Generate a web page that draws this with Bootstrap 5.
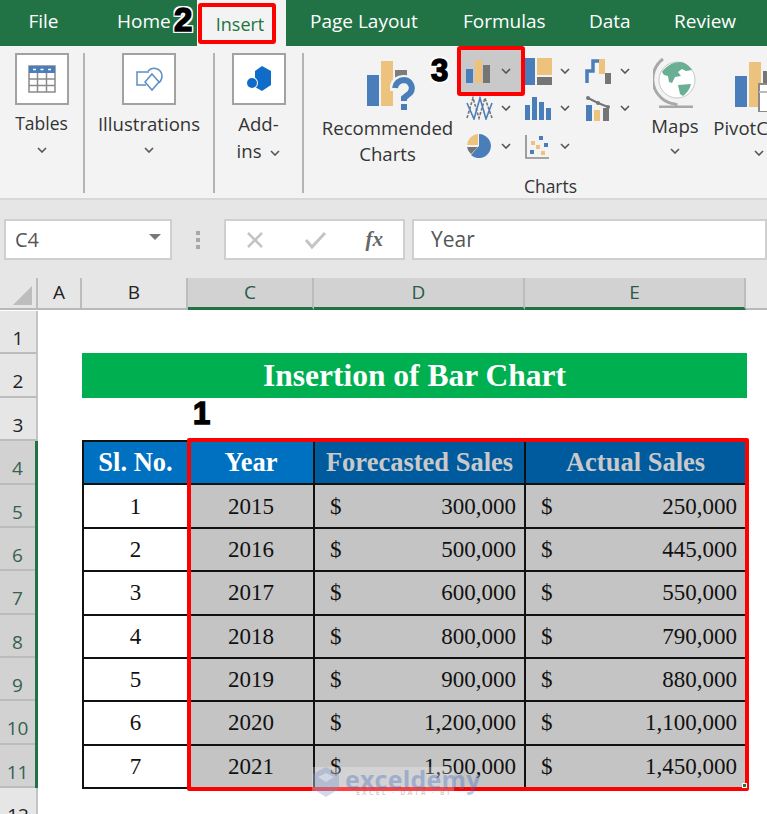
<!DOCTYPE html>
<html lang="en">
<head>
    <meta charset="UTF-8">
    <meta name="viewport" content="width=device-width, initial-scale=1.0">
    <title>Insertion of Bar Chart</title>
    <link href="https://cdn.jsdelivr.net/npm/bootstrap@5.3.0/dist/css/bootstrap.min.css" rel="stylesheet">
    <style>
        body { background: #fff; overflow: hidden; font-family: "Open Sans", "Liberation Sans", sans-serif; color: #333; }
        .app { width: 767px; height: 814px; overflow: hidden; }

        /* tab strip */
        .tab-strip { height: 46px; background: #217346; color: #fff; font-size: 19px; }
        .tab-item { line-height: 43px; white-space: nowrap; flex: none; }
        .tab-file { width: 87px; text-align: center; }
        .tab-home { width: 110px; padding-left: 30px; }
        .tab-insert { width: 89px; background: #f3f3f3; color: #217346; padding: 3px 0 0 1px; font-size: 18px; }
        .tab-insert span { display: block; width: 78px; height: 41px; line-height: 35px; border: 4px solid #f00; border-radius: 3px; text-align: center; padding-left: 6px; }
        .tab-layout { width: 177px; padding-left: 24px; }
        .tab-formulas { width: 126px; }
        .tab-data { width: 85px; }

        /* ribbon */
        .ribbon { height: 154px; background: #f3f3f3; border-bottom: 2px solid #d8d8d8; font-size: 18.6px; line-height: 27px; }
        .rb-group { margin-top: 7px; height: 140px; border-right: 2px solid #b4b4b4; flex: none; }
        .rb-tables { width: 85px; }
        .rb-illus { width: 130px; }
        .rb-addins { width: 89px; }
        .rb-tile { width: 54px; height: 52px; background: #fff; border: 2px solid #a2a2a2; margin-bottom: 5px; }
        .rb-label { white-space: nowrap; }
        .rb-tight { font-size: 17.5px; }
        .chev { width: 10px; height: 6px; display: block; flex: none; }
        .chev-row { height: 26px; }
        .rb-charts { width: 463px; flex: none; }
        .charts-top { height: 126px; flex: none; }
        .charts-name { padding-left: 30px; text-align: center; line-height: 26px; margin-top: 1px; font-size: 17.5px; }
        .rec-block { width: 153px; flex: none; padding: 15px 0 0 14px; line-height: 26px; text-align: center; white-space: nowrap; }
        .rec-block svg { display: block; margin: 0 auto 4px; position: relative; left: 3px; }
        .gallery { display: grid; grid-template-columns: 68px 60px 60px; grid-template-rows: 50px 24px 52px; width: 188px; flex: none; }
        .gal-cell { display: flex; align-items: center; justify-content: space-between; padding-right: 15px; }
        .gal-first { padding-left: 9px; padding-right: 14px; }
        .gal-on { border: 4px solid #f00; border-radius: 3px; background: #c9c9c9; padding-left: 5px; padding-right: 10px; }
        .big-block { padding-top: 16px; text-align: center; flex: none; }
        .big-maps { width: 60px; padding-top: 10px; }
        .big-pivot { width: 108px; white-space: nowrap; }
        .big-block svg { display: block; margin: 0 auto; }
        .big-block .chev { margin: 9px auto 0; }
        .pivot-name { padding-left: 8px; margin-top: 2px; }

        /* formula bar */
        .formula-bar { height: 78px; background: #e6e6e6; padding-top: 19px; font-size: 20px; color: #555; }
        .fb-box { height: 41px; background: #fff; border: 2px solid #cfcfcf; flex: none; }
        .fb-name { width: 168px; margin-left: 4px; padding: 0 9px; }
        .fb-tri { width: 0; height: 0; border-left: 6px solid transparent; border-right: 6px solid transparent; border-top: 6px solid #777; margin-top: -5px; }
        .fb-dots { width: 52px; height: 41px; gap: 3px; flex: none; }
        .fb-dots i { display: block; width: 4px; height: 4px; background: #a8a8a8; }
        .fb-buttons { width: 181px; padding: 0 20px 0 19px; }
        .fb-fx { font: italic bold 21px "Liberation Serif", serif; color: #666; }
        .fb-value { width: 355px; margin-left: 7px; padding-left: 17px; font-size: 21px; }

        /* column and row headers */
        .col-heads { height: 32px; background: #e6e6e6; font-size: 19px; border-bottom: 2px solid #b8b8b8; }
        .col-head { flex: none; text-align: center; line-height: 29px; border-right: 2px solid #bcbcbc; height: 30px; color: #222; }
        .col-on { background: #d2d2d2; border-bottom: 3px solid #217346; height: 32px; color: #275c46; }
        .w-corner { width: 38px; }
        .w-a { width: 44px; }
        .w-b { width: 106px; }
        .w-c { width: 126px; }
        .w-d { width: 211px; }
        .w-e { width: 221px; }
        .corner-tri { width: 0; height: 0; border-style: solid; border-width: 0 0 19px 19px; border-color: transparent transparent #bdbdbd transparent; margin: 8px 0 0 13px; }
        .row-heads { width: 38px; flex: none; font-size: 19px; padding-top: 1px; }
        .row-head { height: 43.375px; background: #e6e6e6; border-right: 2px solid #c4c4c4; border-bottom: 2px solid #bcbcbc; padding-top: 14px; line-height: 26px; text-align: center; color: #222; }
        .row-span { border-right: 3px solid #217346; }
        .row-on { background: #d2d2d2; border-right: 0; color: #37614f; }
        .row-last { border-bottom: 0; }

        /* sheet */
        .sheet-body { padding: 43px 0 0 44px; }
        .sheet-title { width: 665px; height: 45px; background: #00b050; color: #fff; text-align: center; font: bold 31.5px/45px "Liberation Serif", serif; margin-bottom: 42px; }
        .sales-table { width: 663px; table-layout: fixed; border-collapse: collapse; font: 23px "Liberation Serif", serif; color: #111; }
        .sales-table .w-b { width: 105px; }
        .sales-table th, .sales-table td { height: 43.375px; padding: 0 8px 0 15px; border: 2px solid #111; vertical-align: middle; line-height: 1; color: #111; background-color: #c4c4c4; }
        .sales-table th { font-size: 26.5px; text-align: center; padding: 0; font-weight: 700; white-space: nowrap; }
        .sales-table .th-blue { background-color: #0070c0; color: #fff; }
        .sales-table .th-navy { background-color: #005a9e; color: #c9c9c9; }
        .sales-table .td-plain { background-color: #fff; text-align: center; padding: 0; }
        .sales-table .td-year { text-align: center; padding: 0; }

        /* things that lie over the page */
        .callout { position: absolute; font: 900 33px/1 "Liberation Sans", sans-serif; color: #000; -webkit-text-stroke: 1.5px #000; text-shadow: 2px 0 #fff, -2px 0 #fff, 0 2px #fff, 0 -2px #fff, 2px 2px #fff, -2px -2px #fff, 2px -2px #fff, -2px 2px #fff; }
        .call-2 { left: 174px; top: 3px; }
        .call-3 { left: 431px; top: 55px; font-size: 31px; }
        .call-1 { left: 193px; top: 398px; font-size: 31px; text-shadow: none; }
        .range-box { position: absolute; left: 187px; top: 438px; width: 562px; height: 353px; border: 4px solid #f00; border-radius: 2px; }
        .fill-handle { position: absolute; left: 742px; top: 783px; width: 5px; height: 5px; background: #217346; border: 1px solid #fff; }
        .watermark { position: absolute; left: 312px; top: 767px; width: 142px; height: 24px; background: rgba(255,255,255,.25); }
        .wm-name { position: absolute; left: 33px; top: -3px; font: 700 25px/30px "Open Sans", sans-serif; color: rgba(70,110,190,.38); letter-spacing: .2px; }
        .wm-tag { position: absolute; left: 44px; top: 21px; font: 700 7px/10px "Open Sans", sans-serif; color: rgba(120,120,120,.35); letter-spacing: 2.2px; white-space: nowrap; }
    </style>
</head>
<body>
    <svg width="0" height="0" class="position-absolute">
        <symbol id="chev" viewBox="0 0 10 6"><path d="M1 1l4 4 4-4" fill="none" stroke="#555" stroke-width="1.6"/></symbol>
    </svg>

    <div class="app position-relative">
        <!-- tabs -->
        <div class="tab-strip d-flex">
            <div class="tab-item tab-file">File</div>
            <div class="tab-item tab-home">Home</div>
            <div class="tab-item tab-insert"><span>Insert</span></div>
            <div class="tab-item tab-layout">Page Layout</div>
            <div class="tab-item tab-formulas">Formulas</div>
            <div class="tab-item tab-data">Data</div>
            <div class="tab-item">Review</div>
        </div>

        <!-- ribbon -->
        <div class="ribbon d-flex overflow-hidden">
            <div class="rb-group rb-tables d-flex flex-column align-items-center">
                <div class="rb-tile d-flex align-items-center justify-content-center">
                    <svg width="28" height="28" viewBox="0 0 28 28"><rect x="1" y="1" width="26" height="26" fill="#fff" stroke="#8a8a8a" stroke-width="1.5"/><rect x="1" y="1" width="26" height="7" fill="#4a7ebb"/><path d="M5 4.500h3M12.500 4.500h3M20 4.500h3" stroke="#fff" stroke-width="1.500"/><path d="M1 14h26M1 20.500h26M9.500 8v19M18.500 8v19" stroke="#8a8a8a" stroke-width="1.500"/></svg>
                </div>
                <div class="rb-label rb-tight">Tables</div>
                <div class="chev-row d-flex align-items-center"><svg class="chev"><use href="#chev"/></svg></div>
            </div>
            <div class="rb-group rb-illus d-flex flex-column align-items-center">
                <div class="rb-tile d-flex align-items-center justify-content-center">
                    <svg width="30" height="30" viewBox="0 0 30 30" fill="none" stroke="#5b8ec4" stroke-width="1.500"><path d="M12 21H3V8h12"/><path d="M14 7a8 8 0 0 1 14 5c0 3-1 5-3 7"/><path d="M18 10l7 8-7 8-7-8z"/></svg>
                </div>
                <div class="rb-label">Illustrations</div>
                <div class="chev-row d-flex align-items-center"><svg class="chev"><use href="#chev"/></svg></div>
            </div>
            <div class="rb-group rb-addins d-flex flex-column align-items-center">
                <div class="rb-tile d-flex align-items-center justify-content-center">
                    <svg width="28" height="26" viewBox="0 0 28 26"><path d="M17 0l9 5v14l-9 6-7-4V5z" fill="#0f6cc8"/><circle cx="7" cy="17" r="6" fill="#fff"/><circle cx="7" cy="17" r="5" fill="#0f6cc8"/></svg>
                </div>
                <div class="rb-label text-center">Add-<br>ins <svg class="chev d-inline-block ms-1"><use href="#chev"/></svg></div>
            </div>
            <div class="rb-charts d-flex flex-column">
                <div class="charts-top d-flex">
                    <div class="rec-block">
                        <svg width="48" height="50" viewBox="0 0 48 50"><rect x="0" y="14" width="12" height="31" fill="#4a7ebb"/><rect x="14" y="0" width="12" height="45" fill="#edc27d"/><rect x="28" y="9" width="12" height="13" fill="#7d7d7d"/><path d="M28 30v-5a8 8 0 0 1 8-6h2a8 8 0 0 1 6 13l-7 6v3" fill="none" stroke="#f3f3f3" stroke-width="10"/><path d="M28 27a9 9 0 0 1 9-8 8 8 0 0 1 6 13l-6 5v3" fill="none" stroke="#4a7ebb" stroke-width="6"/><rect x="34" y="43" width="6" height="6" fill="#4a7ebb"/></svg>
                        <div>Recommended<br>Charts</div>
                    </div>
                    <div class="gallery">
                        <div class="gal-cell gal-on">
                            <svg width="25" height="25" viewBox="0 0 25 25"><rect y="10" width="7" height="14" fill="#4a7ebb"/><rect x="9" y="1" width="7" height="23" fill="#edc27d"/><rect x="17" y="6" width="7" height="18" fill="#757575"/></svg>
                            <svg class="chev"><use href="#chev"/></svg>
                        </div>
                        <div class="gal-cell">
                            <svg width="27" height="27" viewBox="0 0 27 27"><rect width="10" height="27" fill="#4a7ebb"/><rect x="12" width="15" height="17" fill="#edc27d"/><rect x="12" y="19" width="15" height="8" fill="#757575"/></svg>
                            <svg class="chev"><use href="#chev"/></svg>
                        </div>
                        <div class="gal-cell">
                            <svg width="26" height="26" viewBox="0 0 26 26"><rect x="14" y="1" width="6" height="15" fill="#edc27d"/><rect x="20" y="15" width="6" height="11" fill="#757575"/><path d="M2 25V13h6V3h6" fill="none" stroke="#4a7ebb" stroke-width="3.500"/></svg>
                            <svg class="chev"><use href="#chev"/></svg>
                        </div>
                        <div class="gal-cell gal-first">
                            <svg width="27" height="24" viewBox="0 0 27 24" fill="none" stroke-width="1.600"><path d="M1 22L7 2l6 20 6-20 7 20" stroke="#757575" stroke-dasharray="3 1.500"/><path d="M1 7l7 16 6-21 6 21 6-16" stroke="#4a7ebb"/></svg>
                            <svg class="chev"><use href="#chev"/></svg>
                        </div>
                        <div class="gal-cell">
                            <svg width="26" height="24" viewBox="0 0 26 24" fill="#4a7ebb"><rect y="9" width="5" height="15"/><rect x="7" y="1" width="5" height="23"/><rect x="14" y="6" width="5" height="18"/><rect x="21" y="12" width="5" height="12"/></svg>
                            <svg class="chev"><use href="#chev"/></svg>
                        </div>
                        <div class="gal-cell">
                            <svg width="25" height="25" viewBox="0 0 25 25"><rect x="1" y="9" width="6" height="16" fill="#4a7ebb"/><rect x="9" y="14" width="6" height="11" fill="#edc27d"/><rect x="18" y="12" width="6" height="13" fill="#757575"/><path d="M3 2l10 5 10 4" fill="none" stroke="#777" stroke-width="2"/><circle cx="3" cy="2" r="2" fill="#777"/><circle cx="13" cy="7" r="2" fill="#777"/><circle cx="23" cy="11" r="2" fill="#777"/></svg>
                            <svg class="chev"><use href="#chev"/></svg>
                        </div>
                        <div class="gal-cell gal-first">
                            <svg width="26" height="26" viewBox="0 0 26 26"><path d="M13 13V1a12 12 0 1 1-8 21z" fill="#4a7ebb"/><path d="M12 12V1A12 12 0 0 0 1 12z" fill="#edc27d"/><path d="M12 14H1a12 12 0 0 0 4 7z" fill="#757575"/></svg>
                            <svg class="chev"><use href="#chev"/></svg>
                        </div>
                        <div class="gal-cell">
                            <svg width="25" height="25" viewBox="0 0 25 25"><path d="M1 1v23h23" fill="none" stroke="#8a8a8a" stroke-width="1.600"/><rect x="14" y="2" width="4" height="4" fill="#4a7ebb"/><rect x="6" y="7" width="4" height="4" fill="#edc27d"/><rect x="19" y="9" width="4" height="4" fill="#4a7ebb"/><rect x="11" y="11" width="4" height="4" fill="#edc27d"/><rect x="5" y="16" width="4" height="4" fill="#4a7ebb"/><rect x="16" y="17" width="4" height="4" fill="#edc27d"/></svg>
                            <svg class="chev"><use href="#chev"/></svg>
                        </div>
                    </div>
                    <div class="big-block big-maps">
                        <svg width="44" height="52" viewBox="0 0 44 52"><path d="M10 3A25 25 0 0 0 22 48" fill="none" stroke="#a8a8a8" stroke-width="3"/><circle cx="24" cy="24" r="18" fill="#fff" stroke="#c8c8c8"/><path d="M9 16c4-6 11-10 18-10 4 0 9 3 12 8l-6 1-4-2-4 3 3 4-6 1-3 6-3-1-1-6-4-1zM25 29l13-1c-1 5-4 9-8 12l-3-2z" fill="#6aaf94"/><path d="M23 47v3M6 51h34" stroke="#a8a8a8" stroke-width="3"/></svg>
                        <div class="mt-1">Maps</div>
                        <svg class="chev"><use href="#chev"/></svg>
                    </div>
                    <div class="big-block big-pivot">
                        <svg width="48" height="50" viewBox="0 0 48 50"><rect x="0" y="14" width="12" height="31" fill="#4a7ebb"/><rect x="14" y="0" width="12" height="45" fill="#edc27d"/><rect x="28" y="9" width="12" height="14" fill="#757575"/><rect x="24" y="22" width="24" height="28" fill="#fff" stroke="#8a8a8a" stroke-width="2"/><path d="M24 30h24M33 22v28" stroke="#bbb" stroke-width="2"/></svg>
                        <div class="pivot-name">PivotCharts</div>
                        <svg class="chev"><use href="#chev"/></svg>
                    </div>
                </div>
                <div class="charts-name">Charts</div>
            </div>
        </div>

        <!-- formula bar -->
        <div class="formula-bar d-flex">
            <div class="fb-box fb-name d-flex align-items-center justify-content-between">
                <span>C4</span><span class="fb-tri"></span>
            </div>
            <div class="fb-dots d-flex flex-column align-items-center justify-content-center"><i></i><i></i><i></i></div>
            <div class="fb-box fb-buttons d-flex align-items-center justify-content-between">
                <svg width="20" height="20" viewBox="0 0 20 20"><path d="M3 3l14 14M17 3L3 17" stroke="#c4c4c4" stroke-width="2.500"/></svg>
                <svg width="24" height="20" viewBox="0 0 24 20"><path d="M3 10l6 7L22 3" fill="none" stroke="#c4c4c4" stroke-width="3"/></svg>
                <span class="fb-fx">fx</span>
            </div>
            <div class="fb-box fb-value d-flex align-items-center">Year</div>
        </div>

        <!-- column letters -->
        <div class="col-heads d-flex">
            <div class="col-head w-corner"><div class="corner-tri"></div></div>
            <div class="col-head w-a">A</div>
            <div class="col-head w-b">B</div>
            <div class="col-head col-on w-c">C</div>
            <div class="col-head col-on w-d">D</div>
            <div class="col-head col-on w-e">E</div>
        </div>

        <div class="d-flex">
            <!-- row numbers -->
            <div class="row-heads">
                <div class="row-head">1</div>
                <div class="row-head">2</div>
                <div class="row-head">3</div>
                <div class="row-span">
                    <div class="row-head row-on">4</div>
                    <div class="row-head row-on">5</div>
                    <div class="row-head row-on">6</div>
                    <div class="row-head row-on">7</div>
                    <div class="row-head row-on">8</div>
                    <div class="row-head row-on">9</div>
                    <div class="row-head row-on">10</div>
                    <div class="row-head row-on">11</div>
                </div>
                <div class="row-head row-last">12</div>
            </div>

            <!-- worksheet -->
            <div class="sheet-body flex-grow-1">
                <div class="sheet-title">Insertion of Bar Chart</div>
                <table class="table mb-0 sales-table">
                    <colgroup><col class="w-b"><col class="w-c"><col class="w-d"><col class="w-e"></colgroup>
                    <thead>
                        <tr>
                            <th class="th-blue">Sl. No.</th>
                            <th class="th-blue">Year</th>
                            <th class="th-navy">Forecasted Sales</th>
                            <th class="th-navy">Actual Sales</th>
                        </tr>
                    </thead>
                    <tbody>
                        <tr><td class="td-plain">1</td><td class="td-year">2015</td><td><div class="d-flex justify-content-between"><span>$</span><span>300,000</span></div></td><td><div class="d-flex justify-content-between"><span>$</span><span>250,000</span></div></td></tr>
                        <tr><td class="td-plain">2</td><td class="td-year">2016</td><td><div class="d-flex justify-content-between"><span>$</span><span>500,000</span></div></td><td><div class="d-flex justify-content-between"><span>$</span><span>445,000</span></div></td></tr>
                        <tr><td class="td-plain">3</td><td class="td-year">2017</td><td><div class="d-flex justify-content-between"><span>$</span><span>600,000</span></div></td><td><div class="d-flex justify-content-between"><span>$</span><span>550,000</span></div></td></tr>
                        <tr><td class="td-plain">4</td><td class="td-year">2018</td><td><div class="d-flex justify-content-between"><span>$</span><span>800,000</span></div></td><td><div class="d-flex justify-content-between"><span>$</span><span>790,000</span></div></td></tr>
                        <tr><td class="td-plain">5</td><td class="td-year">2019</td><td><div class="d-flex justify-content-between"><span>$</span><span>900,000</span></div></td><td><div class="d-flex justify-content-between"><span>$</span><span>880,000</span></div></td></tr>
                        <tr><td class="td-plain">6</td><td class="td-year">2020</td><td><div class="d-flex justify-content-between"><span>$</span><span>1,200,000</span></div></td><td><div class="d-flex justify-content-between"><span>$</span><span>1,100,000</span></div></td></tr>
                        <tr><td class="td-plain">7</td><td class="td-year">2021</td><td><div class="d-flex justify-content-between"><span>$</span><span>1,500,000</span></div></td><td><div class="d-flex justify-content-between"><span>$</span><span>1,450,000</span></div></td></tr>
                    </tbody>
                </table>
            </div>
        </div>

        <!-- annotations drawn over the screenshot -->
        <div class="callout call-2">2</div>
        <div class="callout call-3">3</div>
        <div class="callout call-1">1</div>
        <div class="range-box"></div>
        <div class="fill-handle"></div>
        <div class="watermark">
            <svg width="28" height="30" viewBox="0 0 28 30" class="d-block"><path d="M14 0l13 7v15l-13 8-13-8V7z" fill="rgba(120,150,200,.35)"/><path d="M14 6l8 4-8 5-8-5z" fill="rgba(255,255,255,.4)"/></svg>
            <span class="wm-name">exceldemy</span>
            <span class="wm-tag">EXCEL · DATA · BI</span>
        </div>
    </div>

    <script src="https://cdn.jsdelivr.net/npm/bootstrap@5.3.0/dist/js/bootstrap.bundle.min.js"></script>
</body>
</html>
